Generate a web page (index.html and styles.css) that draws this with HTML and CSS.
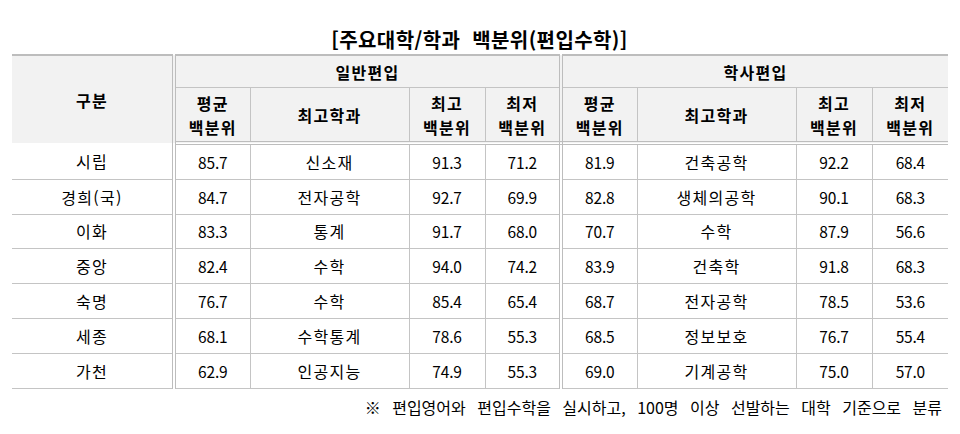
FILE: index.html
```html
<!DOCTYPE html>
<html lang="ko">
<head>
<meta charset="utf-8">
<link rel="stylesheet" href="styles.css">
</head>
<body>
<div class="page">
  <h1 class="title">[주요대학/학과 백분위(편입수학)]</h1>
  <table class="score">
    <colgroup>
      <col class="c-name">
      <col class="c-num"><col class="c-dept"><col class="c-num"><col class="c-num">
      <col class="c-num"><col class="c-dept"><col class="c-num"><col class="c-num">
    </colgroup>
    <thead>
      <tr class="h1">
        <th rowspan="2" class="name grp-end">구분</th>
        <th colspan="4" class="grp-end">일반편입</th>
        <th colspan="4">학사편입</th>
      </tr>
      <tr class="h2">
        <th>평균<br>백분위</th>
        <th>최고학과</th>
        <th>최고<br>백분위</th>
        <th class="grp-end">최저<br>백분위</th>
        <th>평균<br>백분위</th>
        <th>최고학과</th>
        <th>최고<br>백분위</th>
        <th>최저<br>백분위</th>
      </tr>
    </thead>
    <tbody>
      <tr><td class="grp-end">시립</td><td>85.7</td><td>신소재</td><td>91.3</td><td class="grp-end">71.2</td><td>81.9</td><td>건축공학</td><td>92.2</td><td>68.4</td></tr>
      <tr><td class="grp-end">경희(국)</td><td>84.7</td><td>전자공학</td><td>92.7</td><td class="grp-end">69.9</td><td>82.8</td><td>생체의공학</td><td>90.1</td><td>68.3</td></tr>
      <tr><td class="grp-end">이화</td><td>83.3</td><td>통계</td><td>91.7</td><td class="grp-end">68.0</td><td>70.7</td><td>수학</td><td>87.9</td><td>56.6</td></tr>
      <tr><td class="grp-end">중앙</td><td>82.4</td><td>수학</td><td>94.0</td><td class="grp-end">74.2</td><td>83.9</td><td>건축학</td><td>91.8</td><td>68.3</td></tr>
      <tr><td class="grp-end">숙명</td><td>76.7</td><td>수학</td><td>85.4</td><td class="grp-end">65.4</td><td>68.7</td><td>전자공학</td><td>78.5</td><td>53.6</td></tr>
      <tr><td class="grp-end">세종</td><td>68.1</td><td>수학통계</td><td>78.6</td><td class="grp-end">55.3</td><td>68.5</td><td>정보보호</td><td>76.7</td><td>55.4</td></tr>
      <tr><td class="grp-end">가천</td><td>62.9</td><td>인공지능</td><td>74.9</td><td class="grp-end">55.3</td><td>69.0</td><td>기계공학</td><td>75.0</td><td>57.0</td></tr>
    </tbody>
  </table>
  <p class="note">※ 편입영어와 편입수학을 실시하고, 100명 이상 선발하는 대학 기준으로 분류</p>
</div>
</body>
</html>
```

FILE: styles.css
```css
html, body {
  margin: 0;
  padding: 0;
  background: #ffffff;
}

body {
  font-family: "Noto Sans CJK KR", "Noto Sans", sans-serif;
  color: #000000;
}

.page {
  width: 960px;
  padding: 0 13px 0 12px;
  box-sizing: border-box;
}

.title {
  margin: 26px 0 0;
  height: 28px;
  line-height: 28px;
  font-size: 20px;
  font-weight: 700;
  text-align: center;
  letter-spacing: 0.4px;
  word-spacing: 6px;
  color: #000000;
}

.score {
  width: 935px;
  table-layout: fixed;
  border-collapse: collapse;
  border-top: 2px solid #bdbdbd;
  border-bottom: 1px solid #c4c4c4;
}

.c-name { width: 162px; }
.c-num { width: 76px; }
.c-dept { width: 159px; }

.score th,
.score td {
  border-left: 1px solid #c4c4c4;
  border-right: 1px solid #c4c4c4;
  text-align: center;
  vertical-align: middle;
  padding: 0;
  font-size: 16px;
  letter-spacing: 1.3px;
}

.score th:first-child,
.score td:first-child {
  border-left: none;
}

.score tr th:last-child,
.score tr td:last-child {
  border-right: none;
}

.score th {
  background: #f2f2f2;
  font-weight: 700;
  line-height: 24px;
}

.score .h1 th {
  height: 31px;
  border-bottom: 1px solid #c4c4c4;
}

.score .h1 th.name {
  border-bottom: none;
}

.score .h2 th {
  height: 53px;
}

.score thead tr.h2 th,
.score thead th.name {
  border-bottom: 4px double #bdbdbd;
}

.score .grp-end {
  border-right: 4px double #bdbdbd;
}

.score td {
  height: 33.8px;
  line-height: 20px;
  border-top: 1px solid #c4c4c4;
  font-weight: 400;
}

.score td:nth-child(2),
.score td:nth-child(4),
.score td:nth-child(5),
.score td:nth-child(6),
.score td:nth-child(8),
.score td:nth-child(9) {
  font-size: 15.5px;
  letter-spacing: -0.2px;
}

.score tbody tr:first-child td {
  border-top: none;
}

.note {
  margin: 8px 0 0;
  line-height: 20px;
  font-size: 16px;
  text-align: right;
  padding-right: 5px;
  word-spacing: 7px;
  color: #000000;
}
```
